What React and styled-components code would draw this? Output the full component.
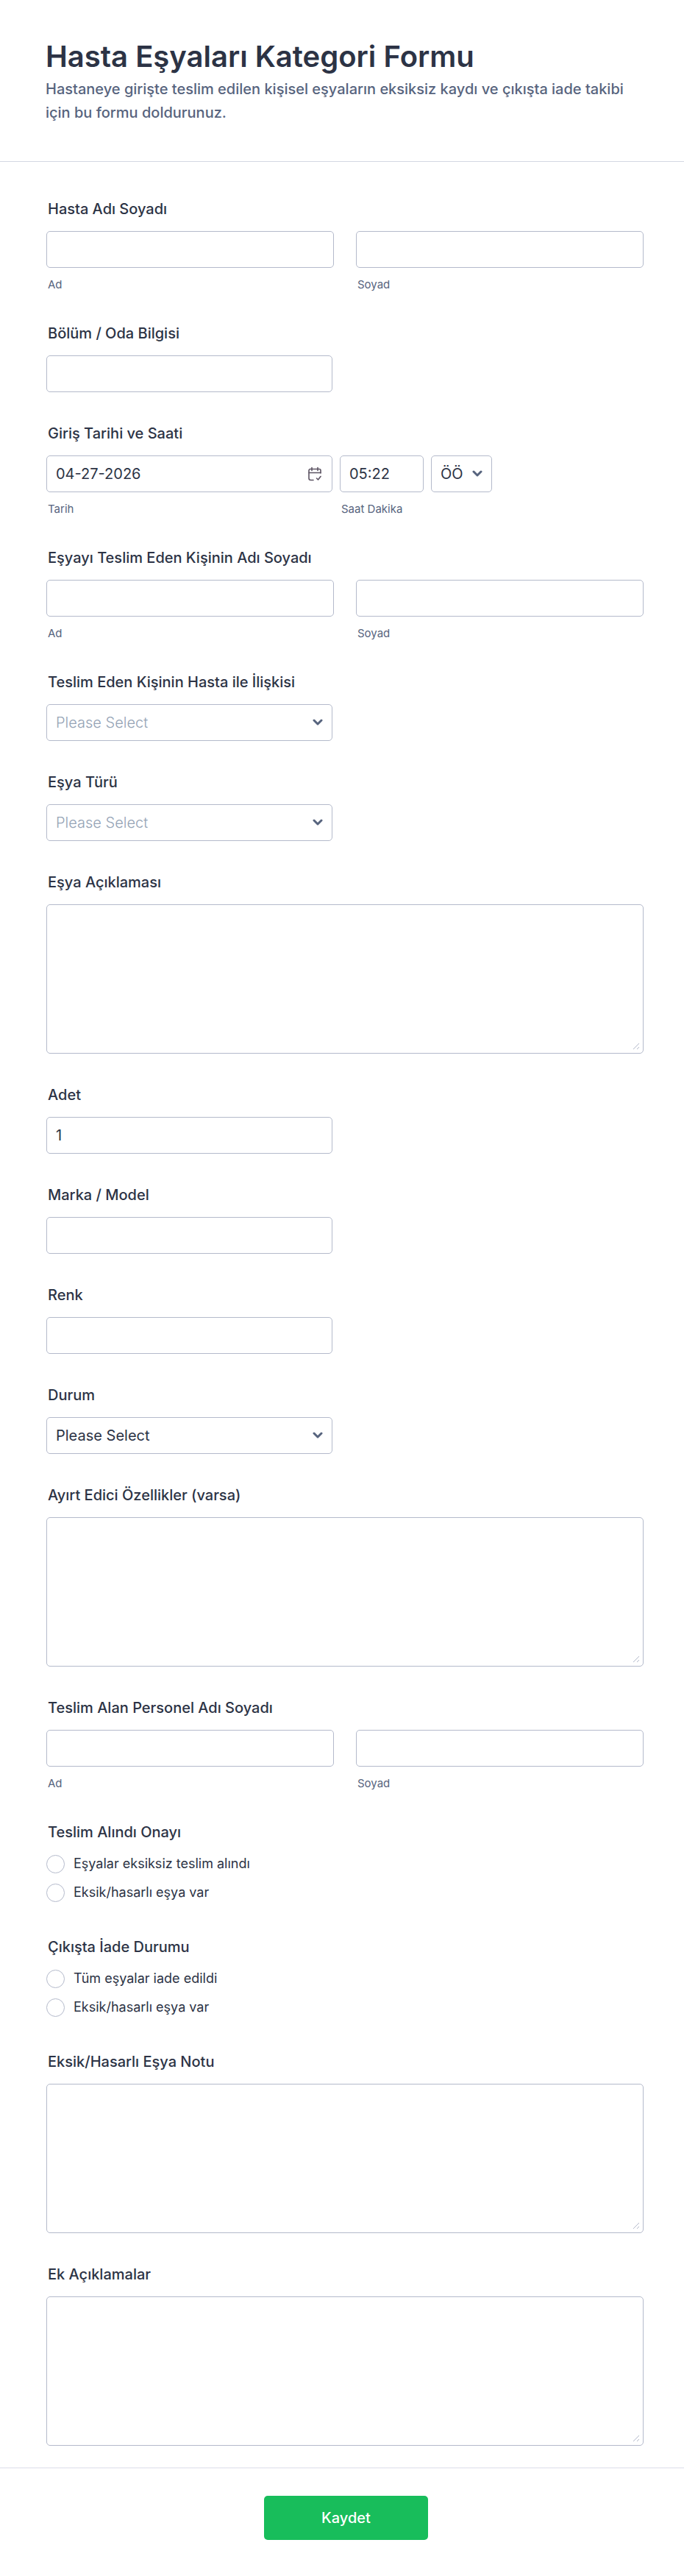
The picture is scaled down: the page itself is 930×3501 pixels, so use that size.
import React, { useId } from 'react';
import styled, { createGlobalStyle } from 'styled-components';

const GlobalStyle = createGlobalStyle`
    * {
        box-sizing: border-box;
    }

    body {
        margin: 0;
        background: #fff;
        color: #2c3345;
        font-family: Inter, 'Liberation Sans', sans-serif;
        font-size: 20px;
    }
`

const Header = styled.header`
    padding: 51px 55px 50px 62px;
    border-bottom: 1px solid #d3d7e2;
`

const Title = styled.h1`
    margin: 0;
    font-size: 40px;
    font-weight: 600;
    line-height: 52px;
`

const Subtitle = styled.p`
    margin: 2px 0 0;
    color: #57647e;
    font-weight: 500;
    line-height: 32px;
`

const Fields = styled.div`
    display: flex;
    flex-direction: column;
    gap: 44px;
    padding: 52px 55px 29px 63px;
`

const FieldLabel = styled.label`
    display: block;
    margin: 0 0 17px 2px;
    font-weight: 500;
    line-height: 25px;
`

const SubLabel = styled.label`
    display: block;
    margin: 13px 0 0 2px;
    color: #57647e;
    font-size: 15px;
    line-height: 20px;
`

const Input = styled.input`
    display: block;
    width: 100%;
    max-width: ${props => props.$wide ? 'none' : '389px'};
    height: 50px;
    padding: 0 12px;
    border: 1px solid #b4bacb;
    border-radius: 5px;
    background: #fff;
    color: #2c3345;
    font: inherit;
`

const TextArea = styled.textarea`
    display: block;
    width: 100%;
    height: 203px;
    padding: 12px;
    border: 1px solid #b4bacb;
    border-radius: 5px;
    color: #2c3345;
    font: inherit;
    resize: vertical;

    &::-webkit-resizer {
        display: none;
    }
`

const NameRow = styled.div`
    display: grid;
    grid-template-columns: 1fr 1fr;
    gap: 30px;
`

const DateRow = styled.div`
    display: grid;
    grid-template-columns: minmax(0, 389px) 114px 83px;
    gap: 10px;
`

const Overlay = styled.div`
    position: relative;
    max-width: ${props => props.$wide ? 'none' : '389px'};
`

const Select = styled.select`
    display: block;
    width: 100%;
    height: 50px;
    padding: 0 12px;
    border: 1px solid #b4bacb;
    border-radius: 5px;
    background: #fff;
    color: ${props => props.$muted ? '#95a3b5' : '#2c3345'};
    font: inherit;
    font-weight: ${props => props.$muted ? 300 : 400};
    appearance: none;
`

const Arrow = styled.svg`
    position: absolute;
    top: 20px;
    right: 13px;
    width: 14px;
    height: 10px;
    pointer-events: none;
`

const Grip = styled.svg`
    position: absolute;
    right: 5px;
    bottom: 5px;
    width: 10px;
    height: 10px;
    pointer-events: none;
`

const CalendarButton = styled.button`
    position: absolute;
    top: 15px;
    right: 14px;
    width: 20px;
    height: 20px;
    padding: 0;
    border: 0;
    background: none;

    svg {
        display: block;
    }
`

const Radios = styled.div`
    display: flex;
    flex-direction: column;
    gap: 13px;
    padding-bottom: 5px;
`

const RadioLabel = styled.label`
    display: flex;
    align-items: center;
    gap: 12px;
    font-size: 18px;
    line-height: 26px;
`

const Radio = styled.input`
    width: 25px;
    height: 25px;
    margin: 0;
    border: 1px solid #b4bacb;
    border-radius: 50%;
    background: #fff;
    appearance: none;

    &:checked {
        border: 7px solid #18bd5b;
    }
`

const Footer = styled.footer`
    display: flex;
    justify-content: center;
    padding: 37px 51px 49px 62px;
    border-top: 2px solid #ecedf3;
`

const Submit = styled.button`
    min-width: 223px;
    height: 60px;
    border: 0;
    border-radius: 5px;
    background: #18bd5b;
    color: #fff;
    font: inherit;
    font-weight: 500;
`

function ArrowIcon() {
    return (
        <Arrow viewBox="0 0 14 10" fill="none" aria-hidden="true">
            <path d="M2 2 L7 7 L12 2" stroke="#57647e" strokeWidth="3" strokeLinecap="round" strokeLinejoin="round" />
        </Arrow>
    )
}

function GripIcon() {
    return (
        <Grip viewBox="0 0 10 10" fill="none" stroke="#b4bacb" aria-hidden="true">
            <path d="M1 9 L9 1 M6 9 L9 6" />
        </Grip>
    )
}

function CalendarIcon() {
    return (
        <svg width="20" height="20" viewBox="0 0 20 20" fill="none" stroke="#5d5463" strokeWidth="1.600" strokeLinecap="round" strokeLinejoin="round">
            <path d="M18 9V5.500a2 2 0 0 0-2-2H4a2 2 0 0 0-2 2V16a2.500 2.500 0 0 0 2.500 2.500H8" />
            <path d="M2 8.500h16M6 1.500v4M14 1.500v4M12.500 16l2 2 3.500-4.500" />
        </svg>
    )
}

function TextField({ label, value }) {
    const id = useId()
    return (
        <div>
            <FieldLabel htmlFor={id}>{label}</FieldLabel>
            <Input id={id} type="text" defaultValue={value} />
        </div>
    )
}

function NameField({ label }) {
    const id = useId()
    return (
        <div role="group" aria-labelledby={id}>
            <FieldLabel as="div" id={id}>{label}</FieldLabel>
            <NameRow>
                <div>
                    <Input $wide id={id + 'first'} type="text" />
                    <SubLabel htmlFor={id + 'first'}>Ad</SubLabel>
                </div>
                <div>
                    <Input $wide id={id + 'last'} type="text" />
                    <SubLabel htmlFor={id + 'last'}>Soyad</SubLabel>
                </div>
            </NameRow>
        </div>
    )
}

function DateField({ label }) {
    const id = useId()
    return (
        <div role="group" aria-labelledby={id}>
            <FieldLabel as="div" id={id}>{label}</FieldLabel>
            <DateRow>
                <div>
                    <Overlay>
                        <Input id={id + 'date'} type="text" defaultValue="04-27-2026" />
                        <CalendarButton type="button" aria-label="Takvim">
                            <CalendarIcon />
                        </CalendarButton>
                    </Overlay>
                    <SubLabel htmlFor={id + 'date'}>Tarih</SubLabel>
                </div>
                <div>
                    <Input id={id + 'time'} type="text" defaultValue="05:22" />
                    <SubLabel htmlFor={id + 'time'}>Saat Dakika</SubLabel>
                </div>
                <Overlay>
                    <Select aria-label="ÖÖ/ÖS">
                        <option>ÖÖ</option>
                        <option>ÖS</option>
                    </Select>
                    <ArrowIcon />
                </Overlay>
            </DateRow>
        </div>
    )
}

function SelectField({ label, muted }) {
    const id = useId()
    return (
        <div>
            <FieldLabel htmlFor={id}>{label}</FieldLabel>
            <Overlay>
                <Select id={id} $muted={muted}>
                    <option>Please Select</option>
                </Select>
                <ArrowIcon />
            </Overlay>
        </div>
    )
}

function AreaField({ label }) {
    const id = useId()
    return (
        <div>
            <FieldLabel htmlFor={id}>{label}</FieldLabel>
            <Overlay $wide>
                <TextArea id={id} />
                <GripIcon />
            </Overlay>
        </div>
    )
}

function RadioField({ label, options }) {
    const id = useId()
    return (
        <div role="radiogroup" aria-labelledby={id}>
            <FieldLabel as="div" id={id}>{label}</FieldLabel>
            <Radios>
                {options.map(option => (
                    <RadioLabel key={option}>
                        <Radio type="radio" name={id} value={option} />
                        {option}
                    </RadioLabel>
                ))}
            </Radios>
        </div>
    )
}

function App() {
    return (
        <form onSubmit={e => e.preventDefault()}>
            <GlobalStyle />
            <Header>
                <Title>Hasta Eşyaları Kategori Formu</Title>
                <Subtitle>Hastaneye girişte teslim edilen kişisel eşyaların eksiksiz kaydı ve çıkışta iade takibi için bu formu doldurunuz.</Subtitle>
            </Header>
            <Fields>
                <NameField label="Hasta Adı Soyadı" />
                <TextField label="Bölüm / Oda Bilgisi" />
                <DateField label="Giriş Tarihi ve Saati" />
                <NameField label="Eşyayı Teslim Eden Kişinin Adı Soyadı" />
                <SelectField label="Teslim Eden Kişinin Hasta ile İlişkisi" muted />
                <SelectField label="Eşya Türü" muted />
                <AreaField label="Eşya Açıklaması" />
                <TextField label="Adet" value="1" />
                <TextField label="Marka / Model" />
                <TextField label="Renk" />
                <SelectField label="Durum" />
                <AreaField label="Ayırt Edici Özellikler (varsa)" />
                <NameField label="Teslim Alan Personel Adı Soyadı" />
                <RadioField label="Teslim Alındı Onayı" options={['Eşyalar eksiksiz teslim alındı', 'Eksik/hasarlı eşya var']} />
                <RadioField label="Çıkışta İade Durumu" options={['Tüm eşyalar iade edildi', 'Eksik/hasarlı eşya var']} />
                <AreaField label="Eksik/Hasarlı Eşya Notu" />
                <AreaField label="Ek Açıklamalar" />
            </Fields>
            <Footer>
                <Submit type="submit">Kaydet</Submit>
            </Footer>
        </form>
    )
}

export default App
